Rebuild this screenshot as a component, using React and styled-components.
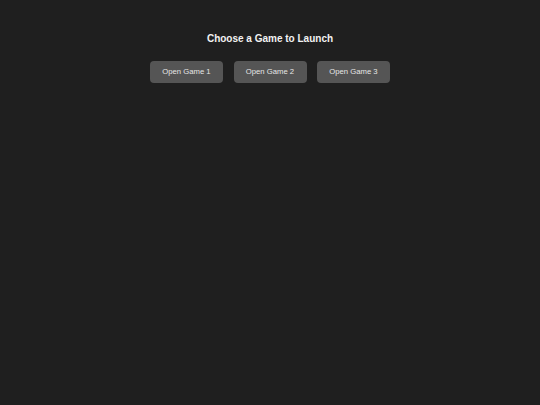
import React from 'react'
import styled, { createGlobalStyle } from 'styled-components'

const GlobalStyle = createGlobalStyle`
  html, body {
    margin: 0;
    padding: 0;
    background: #1f1f1f;
    font-family: "Liberation Sans", Arial, sans-serif;
  }
`

const Page = styled.div`
  min-height: 405px;
  display: flex;
  flex-direction: column;
  align-items: center;
  padding-top: 33px;
  box-sizing: border-box;
`
const Title = styled.h2`
  margin: 0;
  font-size: 10px;
  line-height: 12px;
  font-weight: bold;
  color: #f2f2f2;
`
const ButtonRow = styled.div`
  display: flex;
  gap: 10.5px;
  margin-top: 16px;
`
const GameButton = styled.button`
  width: 73px;
  height: 21.5px;
  padding: 0;
  border: none;
  border-radius: 4px;
  background: #555555;
  color: #e6e6e6;
  font-family: "Liberation Sans", Arial, sans-serif;
  font-size: 7.7px;
  cursor: pointer;
`

const games = [1, 2, 3]

export default function App() {
  return (
    <Page>
      <GlobalStyle />
      <Title>Choose a Game to Launch</Title>
      <ButtonRow>
        {games.map(n => (
          <GameButton key={n}>Open Game {n}</GameButton>
        ))}
      </ButtonRow>
    </Page>
  )
}
